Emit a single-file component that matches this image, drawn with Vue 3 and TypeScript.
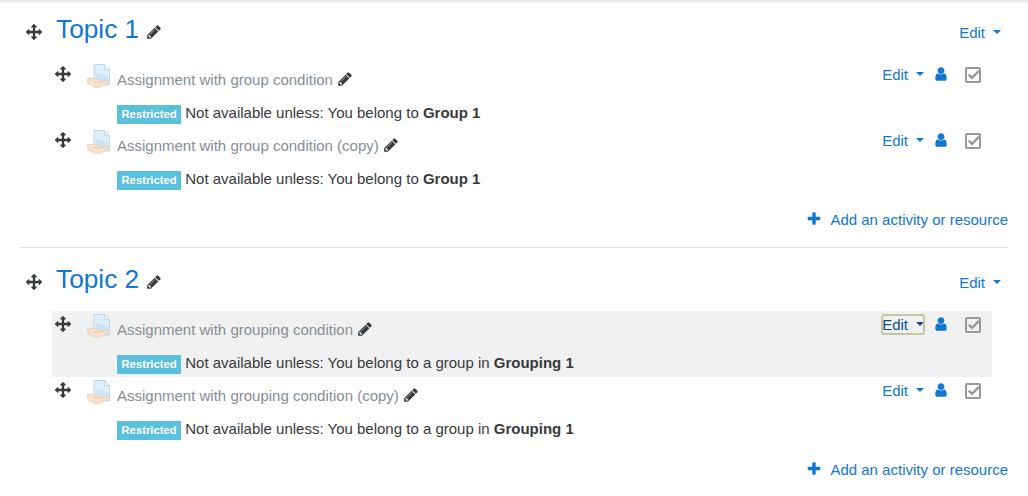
<template>
  <div class="course-content">
    <div class="top-shadow"></div>
    <section v-for="section in sections" :key="section.name" class="section">
      <header class="section-header">
        <svg class="icon move" viewBox="0 0 1792 1792"><path :d="icons.arrows" /></svg>
        <h3 class="section-name"><a href="#">{{ section.name }}</a></h3>
        <svg class="icon pencil" viewBox="0 0 1792 1792"><path :d="icons.pencil" /></svg>
        <a href="#" class="edit-toggle section-edit">Edit</a>
      </header>

      <ul class="activities">
        <li v-for="mod in section.activities" :key="mod.name" class="activity" :class="{ hovered: mod.focused }">
          <svg class="icon move" viewBox="0 0 1792 1792"><path :d="icons.arrows" /></svg>
          <div class="activity-body">
            <div class="activity-title">
              <svg class="activity-icon" viewBox="0 0 24 24">
                <path d="M7 .5h10.5l5 5v15.5H7z" fill="#deeefa" stroke="#b3d1ee" stroke-width=".8" />
                <path d="M9 9l12 3v6H9z" fill="#cde4f6" />
                <path d="M17.5.5v5h5z" fill="#f2f8fd" stroke="#b3d1ee" stroke-width=".7" />
                <path d="M.5 14.8l5-.8 5.5 1.2 4 2 7-.9c1.2 0 1.3 1 .4 1.6l-9 5.3-5.4.4-7-3.6z" fill="#f7e2cc" stroke="#e8c9a8" stroke-width=".7" />
                <path d="M6.5 17.6l6.7.7 2-1" fill="none" stroke="#e2bc98" stroke-width=".7" />
              </svg>
              <a href="#" class="activity-name">{{ mod.name }}</a>
              <svg class="icon pencil" viewBox="0 0 1792 1792"><path :d="icons.pencil" /></svg>
            </div>
            <div class="availability">
              <span class="badge">Restricted</span>
              <span>Not available unless: {{ mod.condition }} <strong>{{ mod.target }}</strong></span>
            </div>
          </div>
          <div class="actions">
            <a href="#" class="edit-toggle" :class="{ focused: mod.focused }">Edit</a>
            <svg class="icon user" viewBox="0 0 1792 1792"><path :d="icons.user" /></svg>
            <svg class="completion" viewBox="0 0 16 16">
              <rect x="1" y="1" width="14" height="14" rx="1" />
              <path class="tick" d="M3.8 7.6l3.2 3.2L14 3.8" />
            </svg>
          </div>
        </li>
      </ul>

      <a href="#" class="add-activity">
        <svg class="icon" viewBox="0 0 1792 1792"><path :d="icons.plus" /></svg>
        <span>Add an activity or resource</span>
      </a>
    </section>
  </div>
</template>

<script setup lang="ts">
interface Activity {
  name: string;
  condition: string;
  target: string;
  focused?: boolean;
}

interface Section {
  name: string;
  activities: Activity[];
}

const sections: Section[] = [
  {
    name: 'Topic 1',
    activities: [
      { name: 'Assignment with group condition', condition: 'You belong to', target: 'Group 1' },
      { name: 'Assignment with group condition (copy)', condition: 'You belong to', target: 'Group 1' },
    ],
  },
  {
    name: 'Topic 2',
    activities: [
      { name: 'Assignment with grouping condition', condition: 'You belong to a group in', target: 'Grouping 1', focused: true },
      { name: 'Assignment with grouping condition (copy)', condition: 'You belong to a group in', target: 'Grouping 1' },
    ],
  },
];

const icons = {
  arrows: 'M1792 896q0 26-19 45l-256 256q-19 19-45 19t-45-19-19-45v-128h-384v384h128q26 0 45 19t19 45-19 45l-256 256q-19 19-45 19t-45-19l-256-256q-19-19-19-45t19-45 45-19h128v-384h-384v128q0 26-19 45t-45 19-45-19l-256-256q-19-19-19-45t19-45l256-256q19-19 45-19t45 19 19 45v128h384v-384h-128q-26 0-45-19t-19-45 19-45l256-256q19-19 45-19t45 19l256 256q19 19 19 45t-19 45-45 19h-128v384h384v-128q0-26 19-45t45-19 45 19l256 256q19 19 19 45z',
  pencil: 'M491 1536l91-91-235-235-91 91v107h128v128h107zm523-928q0-22-22-22-10 0-17 7l-542 542q-7 7-7 17 0 22 22 22 10 0 17-7l542-542q7-7 7-17zm-54-192l416 416-832 832h-416v-416zm683 96q0 53-37 90l-166 166-416-416 166-165q36-38 90-38 53 0 91 38l235 234q37 39 37 91z',
  user: 'M1536 1399q0 109-62.5 187t-150.5 78h-854q-88 0-150.5-78t-62.5-187q0-85 8.5-160.5t31.5-152 58.5-131 94-89 134.5-34.5q131 128 313 128t313-128q76 0 134.5 34.5t94 89 58.5 131 31.5 152 8.5 160.5zm-256-887q0 159-112.5 271.5t-271.5 112.5-271.5-112.5-112.5-271.5 112.5-271.5 271.5-112.5 271.5 112.5 112.5 271.5z',
  plus: 'M1600 736v192q0 40-28 68t-68 28h-416v416q0 40-28 68t-68 28h-192q-40 0-68-28t-28-68v-416h-416q-40 0-68-28t-28-68v-192q0-40 28-68t68-28h416v-416q0-40 28-68t68-28h192q40 0 68 28t28 68v416h416q40 0 68 28t28 68z',
};
</script>

<style>
body { margin: 0; background: #fff; }
</style>

<style scoped>
.course-content { position: relative; box-sizing: border-box; height: 496px; padding: 0 20px; overflow: hidden; font-family: 'Liberation Sans', Arial, sans-serif; font-size: 15px; line-height: 22px; color: #373a3c; }
.top-shadow { position: absolute; top: 0; left: 0; right: 0; height: 4px; background: linear-gradient(#e6e6e6, #fff); }
a { color: #1177d1; text-decoration: none; }
.icon { display: block; width: 16px; height: 16px; fill: currentColor; flex-shrink: 0; }

.section { box-sizing: border-box; height: 250px; border-top: 1px solid #e0e0e0; }
.section:nth-of-type(1) { margin-top: -3px; border-top-color: transparent; }
.section-header { display: flex; align-items: flex-start; height: 63px; padding: 0 7px 0 6px; box-sizing: border-box; }
.section-header .move { margin-top: 26px; }
.section-header .pencil { margin: 26px 0 0 7px; }
.section-name { margin: 16px 0 0 14px; font-size: 26.25px; font-weight: 400; line-height: 30px; }
.section-edit { margin: 24px 0 0 auto; }

.activities { margin: 0 16px 0 32px; padding: 0; list-style: none; }
.activity { display: flex; align-items: flex-start; height: 66px; padding: 0 11px 0 3px; box-sizing: border-box; }
.activity.hovered { background: #f1f1f1; }
.activity .move { margin-top: 5px; }
.activity-body { flex: 1; margin-left: 15px; }
.activity-title { display: flex; align-items: flex-start; }
.activity-icon { width: 24px; height: 24px; margin: 3px 6px 0 1px; }
.activity-name { margin-top: 8px; margin-right: 4px; color: #868e96; }
.activity-title .pencil { margin-top: 10px; }
.availability { display: flex; align-items: flex-start; margin: 11px 0 0 31px; }
.badge { margin: 3px 4.2px 0 0; padding: 0 4.5px; background: #5bc0de; color: #fff; font-size: 11.25px; font-weight: 700; line-height: 19px; }

.actions { display: flex; align-items: flex-start; }
.edit-toggle { display: flex; align-items: center; }
.edit-toggle::after { content: ''; margin: -2px 0 0 8px; border: 4.5px solid transparent; border-top-color: currentColor; border-bottom: 0; }
.actions .edit-toggle { margin-top: 5px; line-height: 17px; }
.edit-toggle.focused { color: #0b4f8a; outline: 2px solid #c3c7a6; outline-offset: -1px; border-radius: 2px; }
.actions .edit-toggle.focused { margin: 4px 0 -1px; line-height: 19px; }
.user { margin: 5px 0 0 9px; color: #1177d1; }
.completion { width: 16px; height: 16px; margin: 6px 0 0 16px; fill: none; stroke: #999; stroke-width: 2; }
.completion .tick { stroke-width: 2.5; }

.add-activity { display: flex; justify-content: flex-end; align-items: center; margin-top: 16px; }
.add-activity .icon { margin: -2px 8px 0 0; }
</style>
